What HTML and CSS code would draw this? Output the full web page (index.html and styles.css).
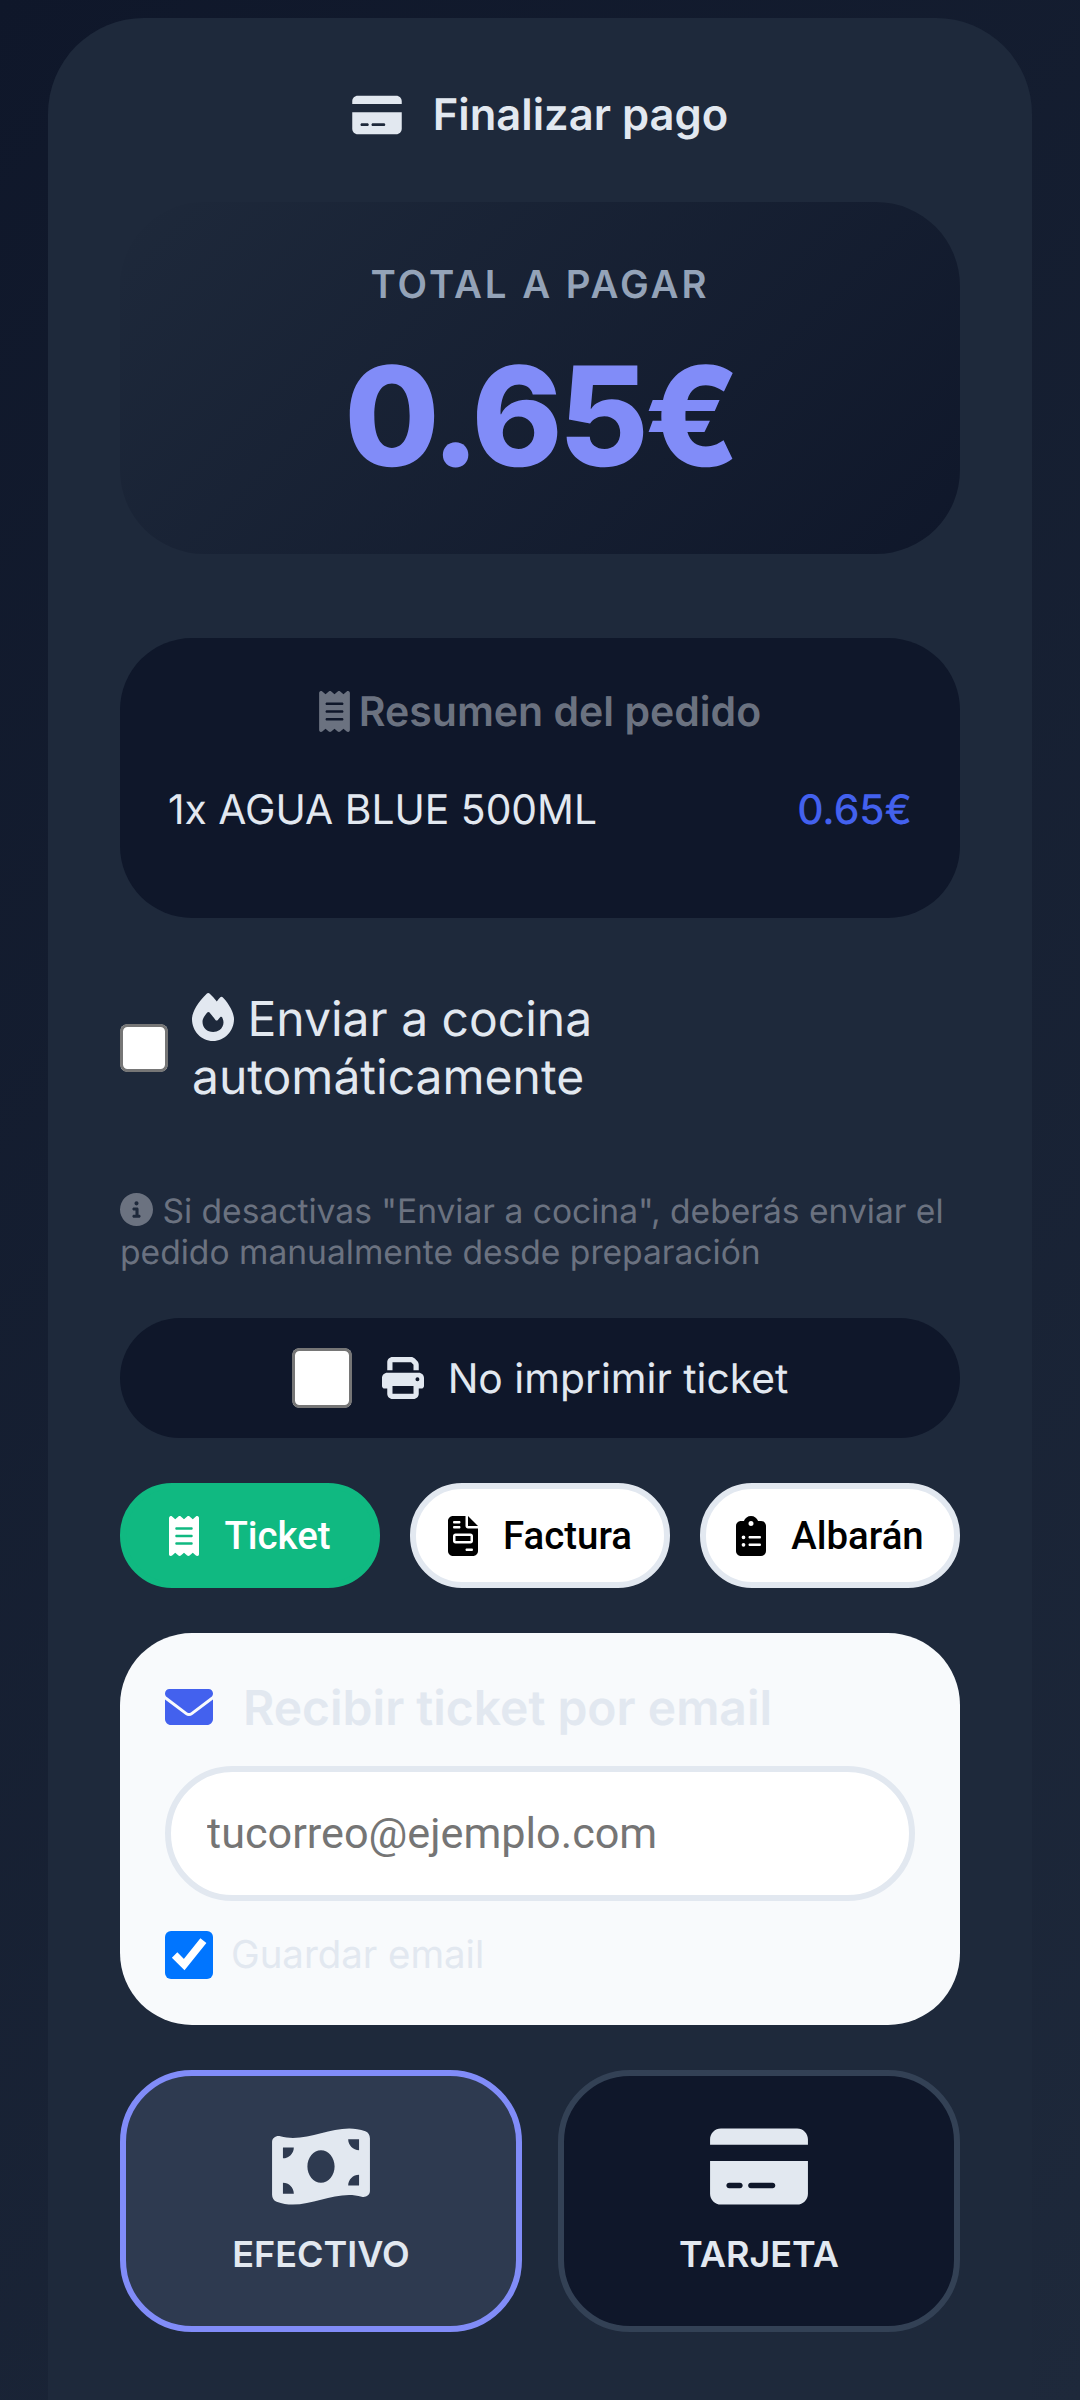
FILE: index.html
```html
<!DOCTYPE html>
<html lang="es">
<head>
<meta charset="utf-8">
<title>Finalizar pago</title>
<link rel="stylesheet" href="styles.css">
</head>
<body>
<main class="card">
  <h1 class="title">
    <svg class="ico ico-title" viewBox="0 0 576 512"><path d="M64 32C28.7 32 0 60.7 0 96v32H576V96c0-35.3-28.7-64-64-64H64zM576 224H0V416c0 35.3 28.7 64 64 64H512c35.3 0 64-28.7 64-64V224zM112 352h64c8.8 0 16 7.2 16 16s-7.2 16-16 16H112c-8.8 0-16-7.2-16-16s7.2-16 16-16zm112 16c0-8.8 7.2-16 16-16H368c8.8 0 16 7.2 16 16s-7.2 16-16 16H240c-8.8 0-16-7.2-16-16z"/></svg>
    <span>Finalizar pago</span>
  </h1>

  <section class="total">
    <div class="total-label">TOTAL A PAGAR</div>
    <div class="total-amount">0.65€</div>
  </section>

  <section class="summary">
    <h2 class="summary-title">
      <svg class="ico ico-summary" viewBox="0 0 384 512"><path d="M14 2.2C22.5-1.7 32.5-.3 39.6 5.8L80 40.4 120.4 5.8c9-7.7 22.3-7.7 31.2 0L192 40.4 232.4 5.8c9-7.7 22.2-7.7 31.2 0L304 40.4 344.4 5.8c7.1-6.1 17.1-7.5 25.6-3.6s14 12.4 14 21.8V488c0 9.4-5.5 17.9-14 21.8s-18.5 2.5-25.6-3.6L304 471.6l-40.4 34.6c-9 7.7-22.2 7.7-31.2 0L192 471.6l-40.4 34.6c-9 7.7-22.3 7.7-31.2 0L80 471.6 39.6 506.2c-7.1 6.1-17.1 7.5-25.6 3.6S0 497.4 0 488V24C0 14.6 5.5 6.1 14 2.2zM96 144c-8.8 0-16 7.2-16 16s7.2 16 16 16H288c8.8 0 16-7.2 16-16s-7.2-16-16-16H96zM80 352c0 8.8 7.2 16 16 16H288c8.8 0 16-7.2 16-16s-7.2-16-16-16H96c-8.8 0-16 7.2-16 16zM96 240c-8.8 0-16 7.2-16 16s7.2 16 16 16H288c8.8 0 16-7.2 16-16s-7.2-16-16-16H96z"/></svg>
      <span>Resumen del pedido</span>
    </h2>
    <div class="summary-row">
      <span>1x AGUA BLUE 500ML</span>
      <span class="summary-price">0.65€</span>
    </div>
  </section>

  <label class="kitchen">
    <input class="check" type="checkbox">
    <span class="kitchen-text"><svg class="ico ico-fire" viewBox="0 0 448 512"><path d="M159.3 5.4c7.8-7.3 19.9-7.2 27.7 .1c27.6 25.9 53.5 53.8 77.7 84c11-14.4 23.5-30.1 37-42.9c7.9-7.4 20.1-7.4 28 .1c34.6 33 63.9 76.6 84.5 118c20.3 40.8 33.8 82.5 33.8 111.9C448 404.2 348.2 512 224 512C98.4 512 0 404.1 0 276.5c0-38.4 17.8-85.3 45.4-131.7C73.3 97.7 112.7 48.6 159.3 5.4zM225.7 416c25.3 0 47.7-7 68.8-21c42.1-29.4 53.4-88.2 28.1-134.4c-4.5-9-16-9.6-22.4-2l-25.2 29.3c-6.6 7.6-18.5 7.4-24.7-.5c-16.5-21-46-58.5-62.8-79.8c-6.3-8-18.3-8.1-24.7-.1c-33.8 42.5-50.8 69.3-50.8 99.4C112 375.4 162.6 416 225.7 416z"/></svg> Enviar a cocina automáticamente</span>
  </label>

  <p class="note"><svg class="ico ico-info" viewBox="0 0 512 512"><path d="M256 512A256 256 0 1 0 256 0a256 256 0 1 0 0 512zM216 336h24V272H216c-13.3 0-24-10.7-24-24s10.7-24 24-24h48c13.3 0 24 10.7 24 24v88h8c13.3 0 24 10.7 24 24s-10.7 24-24 24H216c-13.3 0-24-10.7-24-24s10.7-24 24-24zm40-208a32 32 0 1 1 0 64 32 32 0 1 1 0-64z"/></svg> Si desactivas "Enviar a cocina", deberás enviar el pedido manualmente desde preparación</p>

  <label class="noprint">
    <input class="check check-lg" type="checkbox">
    <svg class="ico ico-print" viewBox="0 0 512 512"><path d="M128 0C92.7 0 64 28.7 64 64v96h64V64H354.7L384 93.3V160h64V93.3c0-17-6.7-33.3-18.7-45.3L400 18.7C388 6.7 371.7 0 354.7 0H128zM384 352v32 64H128V384 368 352H384zm64 32h32c17.7 0 32-14.3 32-32V256c0-35.3-28.7-64-64-64H64c-35.3 0-64 28.7-64 64v96c0 17.7 14.3 32 32 32H64v64c0 35.3 28.7 64 64 64H384c35.3 0 64-28.7 64-64V384zM432 248a24 24 0 1 1 0 48 24 24 0 1 1 0-48z"/></svg>
    <span>No imprimir ticket</span>
  </label>

  <div class="doc-row">
    <button class="doc doc-active" type="button">
      <svg class="ico ico-doc" viewBox="0 0 384 512"><path d="M14 2.2C22.5-1.7 32.5-.3 39.6 5.8L80 40.4 120.4 5.8c9-7.7 22.3-7.7 31.2 0L192 40.4 232.4 5.8c9-7.7 22.2-7.7 31.2 0L304 40.4 344.4 5.8c7.1-6.1 17.1-7.5 25.6-3.6s14 12.4 14 21.8V488c0 9.4-5.5 17.9-14 21.8s-18.5 2.5-25.6-3.6L304 471.6l-40.4 34.6c-9 7.7-22.2 7.7-31.2 0L192 471.6l-40.4 34.6c-9 7.7-22.3 7.7-31.2 0L80 471.6 39.6 506.2c-7.1 6.1-17.1 7.5-25.6 3.6S0 497.4 0 488V24C0 14.6 5.5 6.1 14 2.2zM96 144c-8.8 0-16 7.2-16 16s7.2 16 16 16H288c8.8 0 16-7.2 16-16s-7.2-16-16-16H96zM80 352c0 8.8 7.2 16 16 16H288c8.8 0 16-7.2 16-16s-7.2-16-16-16H96c-8.8 0-16 7.2-16 16zM96 240c-8.8 0-16 7.2-16 16s7.2 16 16 16H288c8.8 0 16-7.2 16-16s-7.2-16-16-16H96z"/></svg>
      <span>Ticket</span>
    </button>
    <button class="doc" type="button">
      <svg class="ico ico-doc" viewBox="0 0 384 512"><path d="M64 0C28.7 0 0 28.7 0 64V448c0 35.3 28.7 64 64 64H320c35.3 0 64-28.7 64-64V160H256c-17.7 0-32-14.3-32-32V0H64zM256 0V128H384L256 0zM80 64h64c8.8 0 16 7.2 16 16s-7.2 16-16 16H80c-8.8 0-16-7.2-16-16s7.2-16 16-16zm0 64h64c8.8 0 16 7.2 16 16s-7.2 16-16 16H80c-8.8 0-16-7.2-16-16s7.2-16 16-16zm16 96H288c17.7 0 32 14.3 32 32v64c0 17.7-14.3 32-32 32H96c-17.7 0-32-14.3-32-32V256c0-17.7 14.3-32 32-32zm0 32v64H288V256H96zM240 416h64c8.8 0 16 7.2 16 16s-7.2 16-16 16H240c-8.8 0-16-7.2-16-16s7.2-16 16-16z"/></svg>
      <span>Factura</span>
    </button>
    <button class="doc" type="button">
      <svg class="ico ico-doc" viewBox="0 0 384 512"><path d="M192 0c-41.8 0-77.4 26.7-90.5 64H64C28.7 64 0 92.7 0 128V448c0 35.3 28.7 64 64 64H320c35.3 0 64-28.7 64-64V128c0-35.3-28.7-64-64-64H282.5C269.4 26.7 233.8 0 192 0zm0 64a32 32 0 1 1 0 64 32 32 0 1 1 0-64zM72 272a24 24 0 1 1 48 0 24 24 0 1 1 -48 0zm104-16H304c8.8 0 16 7.2 16 16s-7.2 16-16 16H176c-8.8 0-16-7.2-16-16s7.2-16 16-16zM72 368a24 24 0 1 1 48 0 24 24 0 1 1 -48 0zm88 0c0-8.8 7.2-16 16-16H304c8.8 0 16 7.2 16 16s-7.2 16-16 16H176c-8.8 0-16-7.2-16-16z"/></svg>
      <span>Albarán</span>
    </button>
  </div>

  <section class="email">
    <div class="email-title">
      <svg class="ico ico-mail" viewBox="0 0 512 512"><path d="M48 64C21.5 64 0 85.5 0 112c0 15.1 7.1 29.3 19.2 38.4L236.8 313.6c11.4 8.5 27 8.5 38.4 0L492.8 150.4c12.1-9.1 19.2-23.3 19.2-38.4c0-26.5-21.5-48-48-48H48zM0 176V384c0 35.3 28.7 64 64 64H448c35.3 0 64-28.7 64-64V176L294.4 339.2c-22.8 17.1-54 17.1-76.8 0L0 176z"/></svg>
      <span>Recibir ticket por email</span>
    </div>
    <input class="email-input" type="email" placeholder="tucorreo@ejemplo.com">
    <label class="email-save">
      <input class="check" type="checkbox" checked>
      <span>Guardar email</span>
    </label>
  </section>

  <div class="pay-row">
    <button class="pay pay-active" type="button">
      <svg class="ico ico-pay" viewBox="0 0 576 512"><path d="M0 112.5V422.3c0 18 10.1 35 27 41.3c87 32.5 174 10.3 261-11.9c79.8-20.3 159.6-40.7 239.3-18.1c23 6.5 48.7-9.5 48.7-33.4V89.7c0-18-10.1-35-27-41.3C462 15.9 375 38.1 288 60.3C208.2 80.6 128.4 100.9 48.7 78.4C25.6 71.9 0 87.8 0 111.7zM288 352c-44.2 0-80-43-80-96s35.8-96 80-96s80 43 80 96s-35.8 96-80 96zM64 352c35.3 0 64 28.7 64 64H64V352zm64-208c0 35.3-28.7 64-64 64V144h64zM512 304v64H448c0-35.3 28.7-64 64-64zM448 96h64v64c-35.3 0-64-28.7-64-64z"/></svg>
      <span>EFECTIVO</span>
    </button>
    <button class="pay" type="button">
      <svg class="ico ico-pay" viewBox="0 0 576 512"><path d="M64 32C28.7 32 0 60.7 0 96v32H576V96c0-35.3-28.7-64-64-64H64zM576 224H0V416c0 35.3 28.7 64 64 64H512c35.3 0 64-28.7 64-64V224zM112 352h64c8.8 0 16 7.2 16 16s-7.2 16-16 16H112c-8.8 0-16-7.2-16-16s7.2-16 16-16zm112 16c0-8.8 7.2-16 16-16H368c8.8 0 16 7.2 16 16s-7.2 16-16 16H240c-8.8 0-16-7.2-16-16z"/></svg>
      <span>TARJETA</span>
    </button>
  </div>
</main>
</body>
</html>
```

FILE: styles.css
```css
* { box-sizing: border-box; }
html, body { margin: 0; height: 2400px; overflow: hidden; }
body {
  background: linear-gradient(135deg, #0f172a, #1e293b);
  padding: 18px 48px 0;
  font-family: Inter, "Noto Sans", sans-serif;
  color: #e2e8f0;
  text-rendering: geometricPrecision;
}
.ico { fill: currentColor; display: block; flex: none; }

.card {
  background: #1e293b;
  border-radius: 96px 96px 0 0;
  padding: 72px 72px 90px;
  min-height: 2382px;
}

.title {
  margin: 0 0 62px;
  height: 50px;
  display: flex;
  align-items: center;
  justify-content: center;
  gap: 31px;
  font-size: 43.5px;
  font-weight: 600;
  color: #e2e8f0;
}
.ico-title { width: 50px; height: 44px; }

.total {
  height: 352px;
  border-radius: 84px;
  background: linear-gradient(135deg, #1e293b, #0f172a);
  padding-top: 60px;
  text-align: center;
  margin-bottom: 84px;
}
.total-label {
  font-size: 38.4px;
  line-height: 47px;
  font-weight: 600;
  letter-spacing: 3px;
  color: #94a3b8;
}
.total-amount {
  margin-top: 24px;
  font-size: 138px;
  line-height: 167px;
  font-weight: 800;
  letter-spacing: -0.03em;
  color: #818cf8;
}

.summary {
  height: 280px;
  border-radius: 72px;
  background: #0f172a;
  padding: 48px 48px 0;
  margin-bottom: 72px;
}
.summary-title {
  margin: 0 0 48px;
  height: 50px;
  display: flex;
  align-items: center;
  justify-content: center;
  gap: 9px;
  font-size: 41px;
  font-weight: 600;
  color: #6b7280;
}
.ico-summary { width: 31px; height: 41px; }
.summary-row {
  display: flex;
  justify-content: space-between;
  align-items: center;
  font-size: 40.8px;
  line-height: 51px;
  color: #e2e8f0;
}
.summary-price { color: #4361ee; font-weight: 500; }

.check {
  zoom: 3;
  width: 16px;
  height: 16px;
  margin: 0;
  flex: none;
}
.check-lg { width: 20px; height: 20px; }

.kitchen {
  display: flex;
  align-items: center;
  gap: 24px;
  margin-bottom: 85px;
}
.kitchen-text {
  font-size: 48px;
  line-height: 58px;
}
.ico-fire { display: inline-block; width: 42px; height: 48px; vertical-align: -5px; }

.note {
  margin: 0 0 45px;
  font-size: 33.6px;
  line-height: 41px;
  color: #6b7280;
}
.ico-info { display: inline-block; width: 33px; height: 33px; vertical-align: -3px; }

.noprint {
  height: 120px;
  border-radius: 60px;
  background: #0f172a;
  display: flex;
  align-items: center;
  justify-content: center;
  margin-bottom: 45px;
  font-size: 40.8px;
}
.ico-print { width: 42px; height: 42px; margin: 0 24px 0 30px; }

.doc-row {
  display: grid;
  grid-template-columns: repeat(3, 1fr);
  gap: 30px;
  margin-bottom: 45px;
}
.doc {
  height: 105px;
  border: 6px solid #e2e8f0;
  border-radius: 52px;
  background: #fff;
  color: #000;
  display: flex;
  align-items: center;
  justify-content: center;
  gap: 25px;
  padding: 0;
  font-family: Roboto, sans-serif;
  font-size: 38.4px;
  font-weight: 500;
}
.doc-active { background: #10b981; border-color: #10b981; color: #fff; }
.ico-doc { width: 30px; height: 40px; }

.email {
  height: 392px;
  border-radius: 72px;
  background: #f8fafc;
  padding: 45px;
  margin-bottom: 45px;
}
.email-title {
  height: 58px;
  display: flex;
  align-items: center;
  gap: 30px;
  font-size: 48px;
  font-weight: 600;
  color: #e2e8f0;
  margin-bottom: 30px;
}
.ico-mail { width: 48px; height: 48px; color: #4361ee; }
.email-input {
  display: block;
  width: 100%;
  height: 135px;
  border: 6px solid #e2e8f0;
  border-radius: 68px;
  background: #fff;
  padding: 0 36px;
  font-family: Roboto, sans-serif;
  font-size: 43.2px;
  margin-bottom: 30px;
  outline: none;
}
.email-input::placeholder { color: #757575; }
.email-save {
  display: flex;
  align-items: center;
  gap: 18px;
  font-size: 38.4px;
  color: #e2e8f0;
}

.pay-row {
  display: grid;
  grid-template-columns: 1fr 1fr;
  gap: 36px;
}
.pay {
  height: 262px;
  border: 6px solid #334155;
  border-radius: 72px;
  background: #0f172a;
  color: #e2e8f0;
  display: flex;
  flex-direction: column;
  align-items: center;
  justify-content: center;
  gap: 22px;
  padding: 0 0 4px;
  font-family: Inter, sans-serif;
  font-size: 36px;
  font-weight: 600;
}
.pay-active { background: #2e3a50; border-color: #818cf8; }
.ico-pay { width: 98px; height: 87px; }
```
